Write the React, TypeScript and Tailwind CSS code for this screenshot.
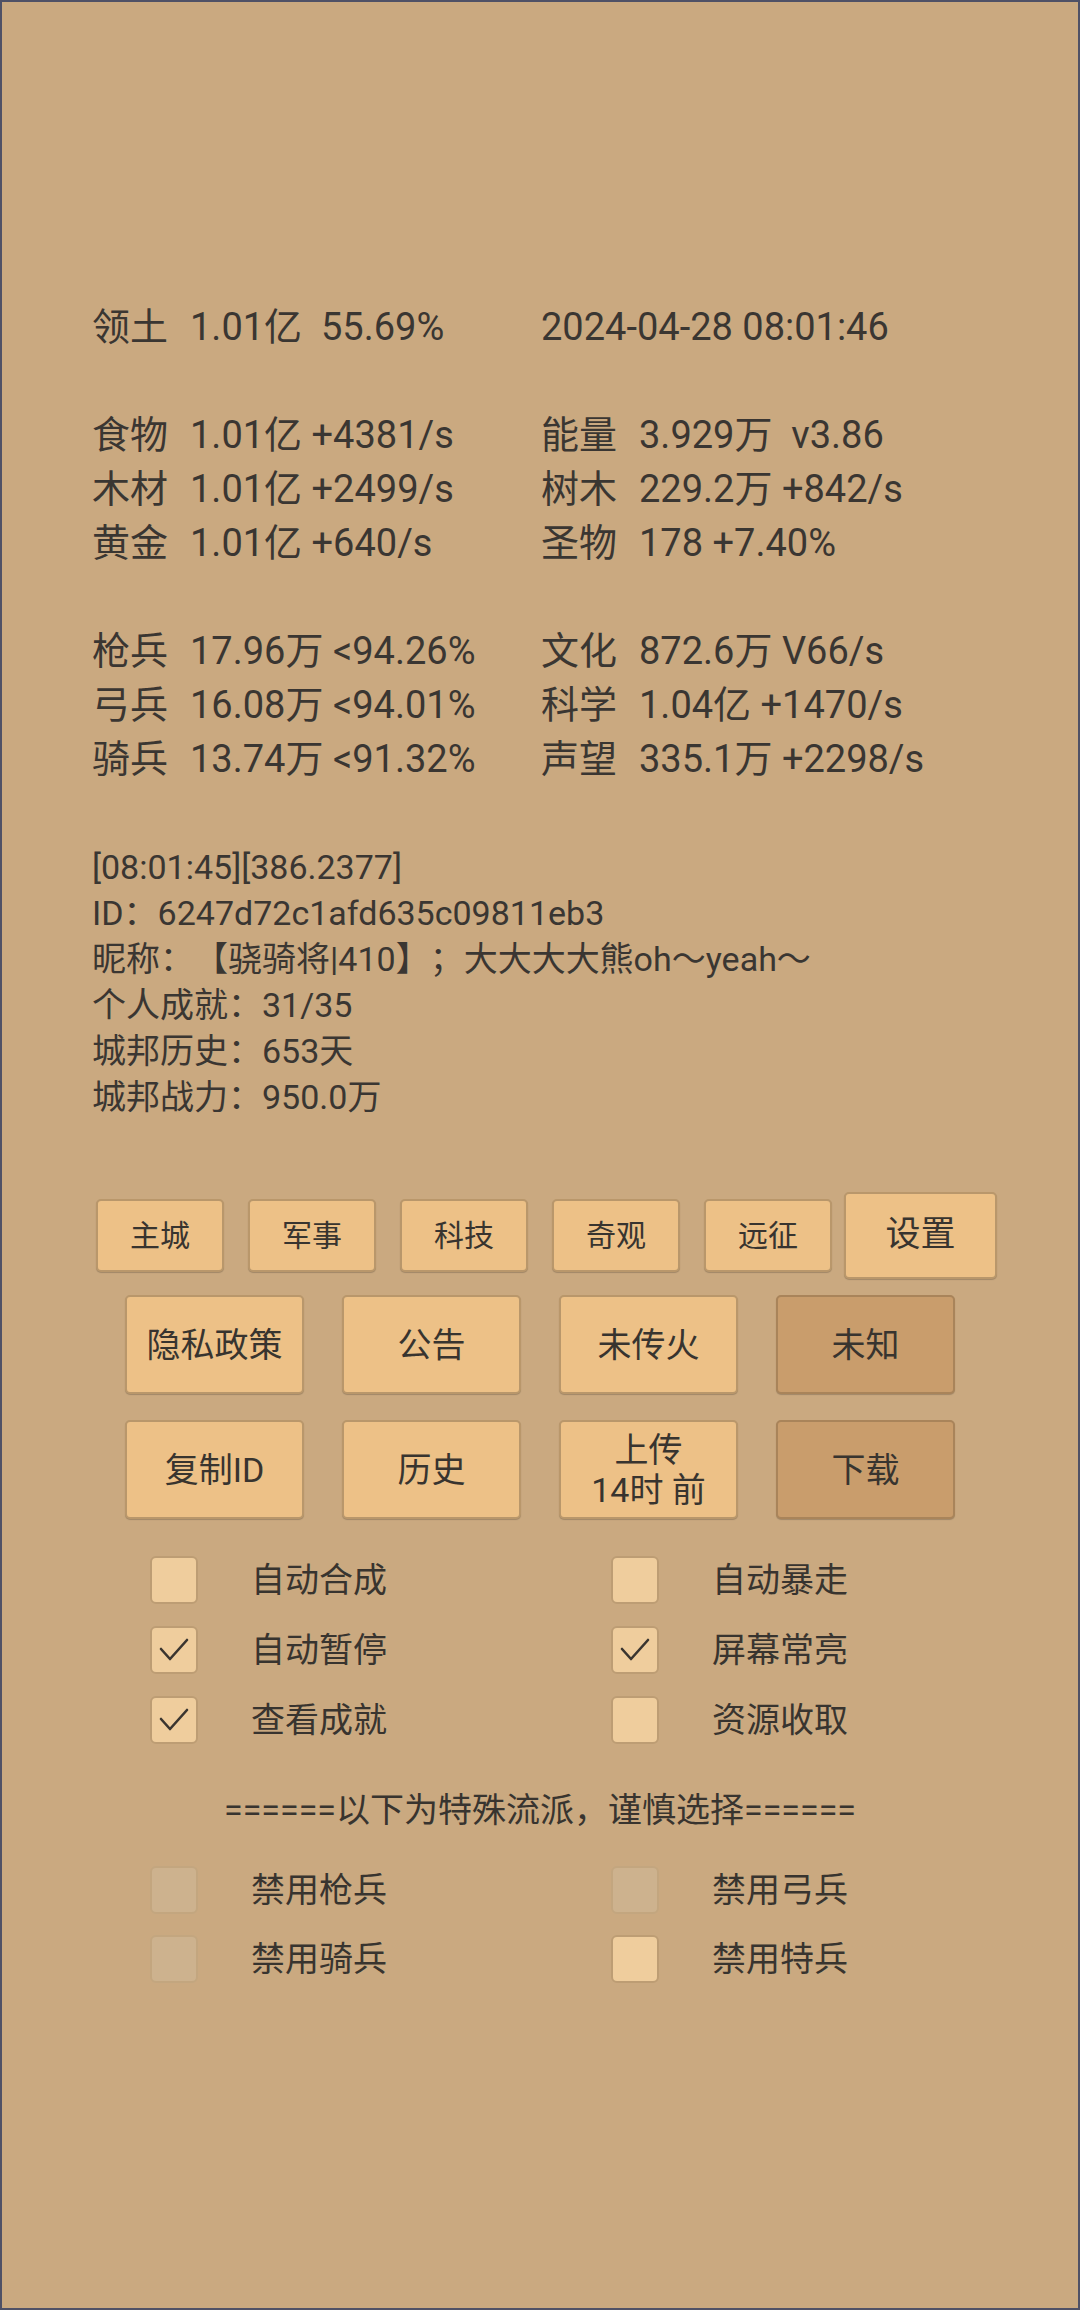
import React from "react";

const FONT = "font-['Roboto','Noto_Sans_CJK_SC',sans-serif]";

function Stat({ label, value }: { label: string; value: string }) {
  return (
    <div className="flex h-[54px] items-center leading-[54px]">
      <span>{label}</span>
      <span className="ml-[22px] whitespace-pre">{value}</span>
    </div>
  );
}

function StatRow({ left, right }: { left?: [string, string]; right?: [string, string] }) {
  return (
    <div className="grid h-[54px] grid-cols-[449px_1fr]">
      <div>{left ? <Stat label={left[0]} value={left[1]} /> : null}</div>
      <div>{right ? <Stat label={right[0]} value={right[1]} /> : null}</div>
    </div>
  );
}

function SmallBtn({ text }: { text: string }) {
  return (
    <div className="flex h-[73px] w-[128px] items-center justify-center rounded-[5px] border-2 border-[#b9976b] bg-[#edc187] text-[30px] text-[#38342f] shadow-[0_1px_1px_rgba(0,0,0,0.2)]">
      {text}
    </div>
  );
}

function BigBtn({ children, dark }: { children: React.ReactNode; dark?: boolean }) {
  return (
    <div
      className={
        dark
          ? "flex h-[99px] w-[179px] flex-col items-center justify-center rounded-[5px] border-2 border-[#a9845a] bg-[#c99d6c] text-[34px] leading-[40px] text-[#38342f] shadow-[0_1px_1px_rgba(0,0,0,0.2)]"
          : "flex h-[99px] w-[179px] flex-col items-center justify-center rounded-[5px] border-2 border-[#b9976b] bg-[#edc187] text-[34px] leading-[40px] text-[#38342f] shadow-[0_1px_1px_rgba(0,0,0,0.2)]"
      }
    >
      {children}
    </div>
  );
}

function Check({ label, checked, disabled }: { label: string; checked?: boolean; disabled?: boolean }) {
  return (
    <div className="flex h-[48px] items-center gap-[53px]">
      <div
        className={
          disabled
            ? "flex h-[48px] w-[48px] items-center justify-center rounded-[6px] border-2 border-[#c3a67f] bg-[#cdb28e]"
            : "flex h-[48px] w-[48px] items-center justify-center rounded-[6px] border-2 border-[#bd9d74] bg-[#efcd9d]"
        }
      >
        {checked ? (
          <svg width="44" height="44" viewBox="0 0 44 44" fill="none">
            <path d="M9 21 L18 31 L35 12" stroke="#3a3530" strokeWidth="2.6" strokeLinecap="round" strokeLinejoin="round" />
          </svg>
        ) : null}
      </div>
      <span className="text-[34px] leading-[48px] text-[#38342f]">{label}</span>
    </div>
  );
}

export default function App() {
  return (
    <div className={`${FONT} box-border h-[2310px] w-[1080px] overflow-hidden border-2 border-[#4f5166] bg-[#caa980] text-[#3a3632]`}>
      <div className="grid h-[54px] grid-cols-[449px_1fr] pl-[90px] mt-[298px] text-[38px] leading-[54px]">
        <Stat label="领土" value="1.01亿  55.69%" />
        <div className="whitespace-pre">2024-04-28 08:01:46</div>
      </div>
      <div className="pl-[90px] text-[38px]">
        <div className="h-[54px]" />
        <StatRow left={["食物", "1.01亿 +4381/s"]} right={["能量", "3.929万  v3.86"]} />
        <StatRow left={["木材", "1.01亿 +2499/s"]} right={["树木", "229.2万 +842/s"]} />
        <StatRow left={["黄金", "1.01亿 +640/s"]} right={["圣物", "178 +7.40%"]} />
        <div className="h-[54px]" />
        <StatRow left={["枪兵", "17.96万 <94.26%"]} right={["文化", "872.6万 V66/s"]} />
        <StatRow left={["弓兵", "16.08万 <94.01%"]} right={["科学", "1.04亿 +1470/s"]} />
        <StatRow left={["骑兵", "13.74万 <91.32%"]} right={["声望", "335.1万 +2298/s"]} />
      </div>

      <div className="mt-[58px] pl-[90px] text-[34px] leading-[46px] [text-spacing-trim:space-all]">
        <div>[08:01:45][386.2377]</div>
        <div>ID：6247d72c1afd635c09811eb3</div>
        <div>昵称：【骁骑将|410】；大大大大熊oh～yeah～</div>
        <div>个人成就：31/35</div>
        <div>城邦历史：653天</div>
        <div>城邦战力：950.0万</div>
      </div>

      <div className="mt-[72px] flex h-[87px] items-center pl-[94px]">
        <div className="flex gap-[24px]">
          <SmallBtn text="主城" />
          <SmallBtn text="军事" />
          <SmallBtn text="科技" />
          <SmallBtn text="奇观" />
          <SmallBtn text="远征" />
        </div>
        <div className="ml-[12px] flex h-[87px] w-[153px] items-center justify-center rounded-[5px] border-2 border-[#b9976b] bg-[#edc187] text-[35px] text-[#38342f] shadow-[0_1px_1px_rgba(0,0,0,0.2)]">
          设置
        </div>
      </div>

      <div className="mt-[16px] flex gap-[38px] pl-[123px]">
        <BigBtn>隐私政策</BigBtn>
        <BigBtn>公告</BigBtn>
        <BigBtn>未传火</BigBtn>
        <BigBtn dark>未知</BigBtn>
      </div>

      <div className="mt-[26px] flex gap-[38px] pl-[123px]">
        <BigBtn>复制ID</BigBtn>
        <BigBtn>历史</BigBtn>
        <BigBtn>
          <span>上传</span>
          <span>14时 前</span>
        </BigBtn>
        <BigBtn dark>下载</BigBtn>
      </div>

      <div className="mt-[37px] grid grid-cols-[461px_1fr] gap-y-[22px] pl-[148px]">
        <Check label="自动合成" />
        <Check label="自动暴走" />
        <Check label="自动暂停" checked />
        <Check label="屏幕常亮" checked />
        <Check label="查看成就" checked />
        <Check label="资源收取" />
      </div>

      <div className="mt-[42px] h-[48px] text-center text-[34px] leading-[48px] text-[#38342f] [text-spacing-trim:space-all]">
        ======以下为特殊流派，谨慎选择======
      </div>

      <div className="mt-[32px] grid grid-cols-[461px_1fr] gap-y-[21px] pl-[148px]">
        <Check label="禁用枪兵" disabled />
        <Check label="禁用弓兵" disabled />
        <Check label="禁用骑兵" disabled />
        <Check label="禁用特兵" />
      </div>
    </div>
  );
}
